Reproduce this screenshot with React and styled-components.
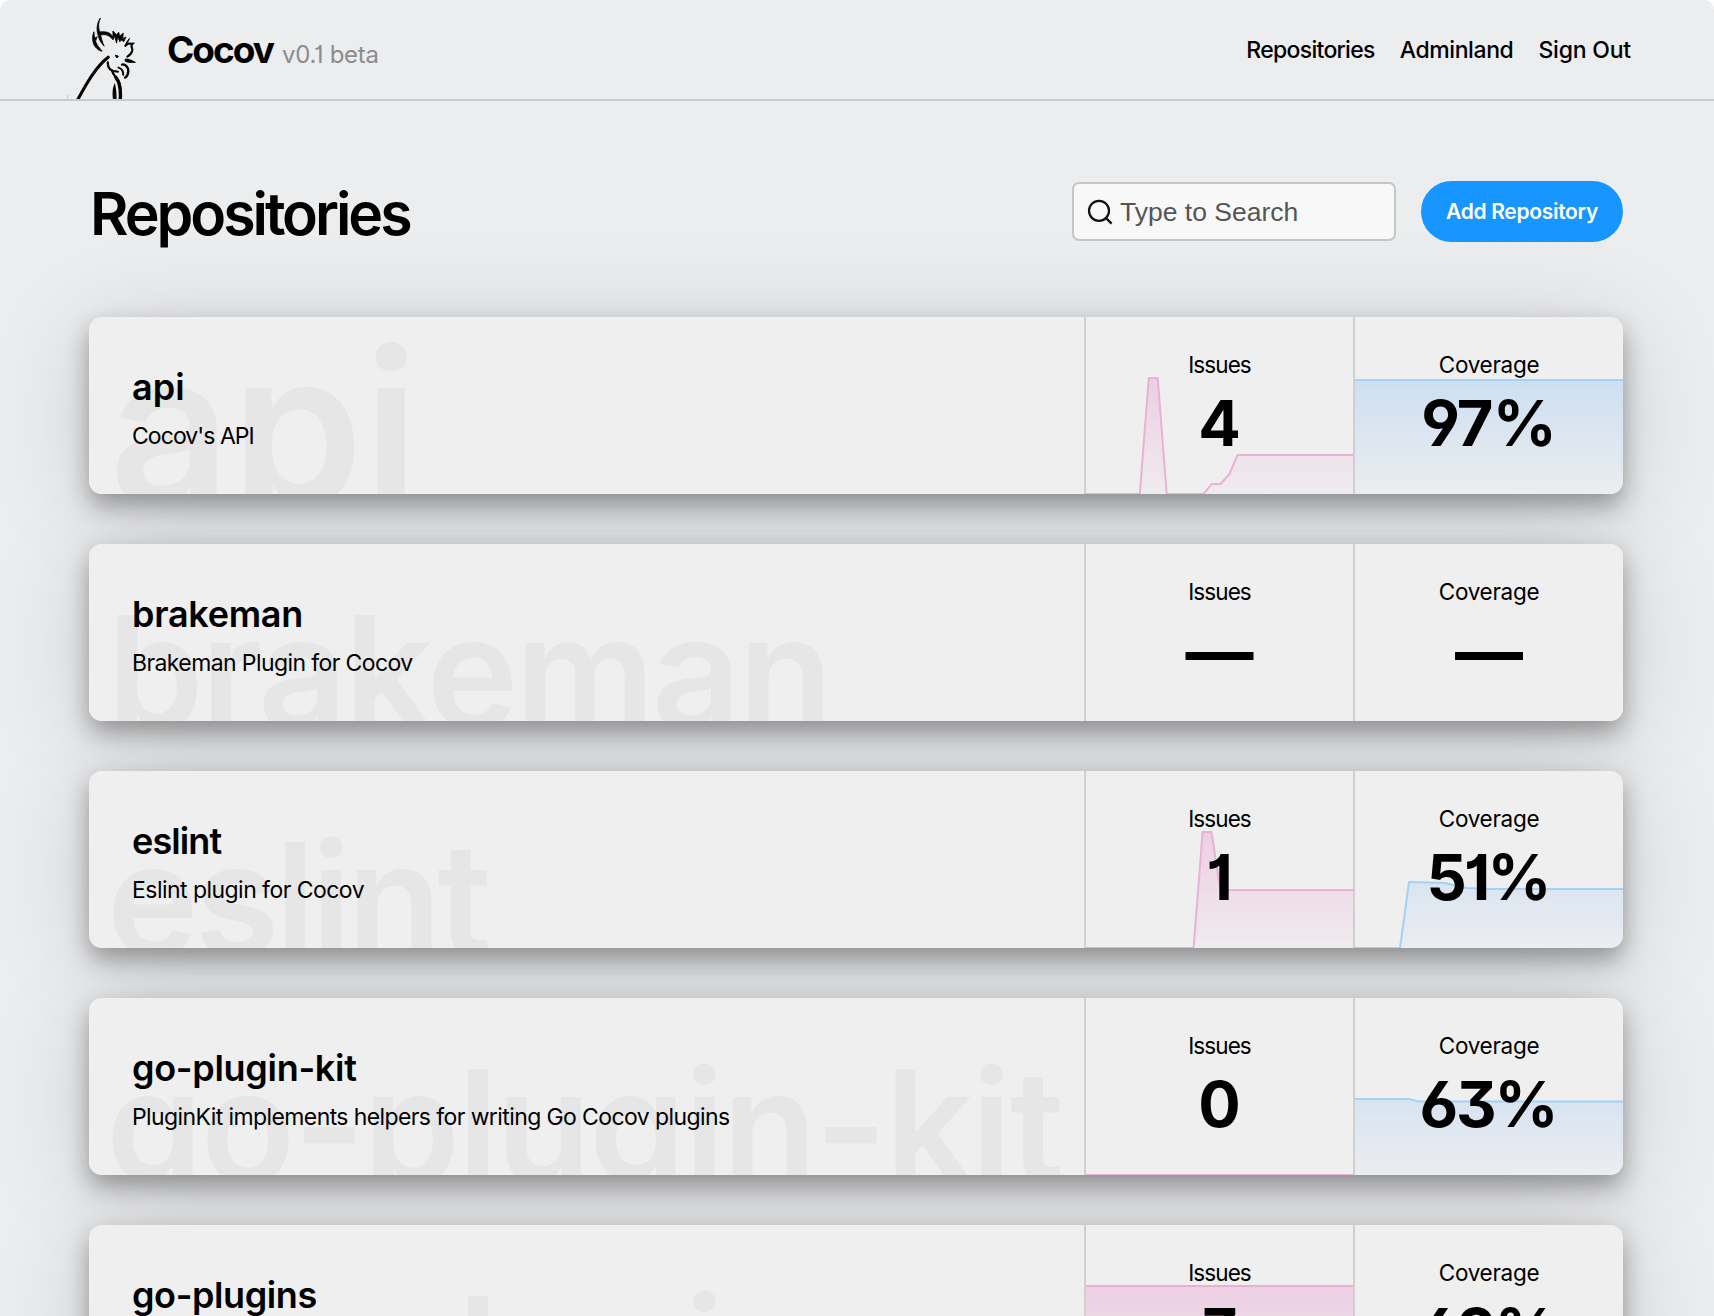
import React from "react";
import styled, { createGlobalStyle } from "styled-components";

const GlobalStyle = createGlobalStyle`
  *, *::before, *::after { box-sizing: border-box; }
  html { background: #fff; overflow: hidden; }
  body {
    margin: 0;
    color: #000;
    font-family: Inter, "Liberation Sans", sans-serif;
    font-feature-settings: "cv01", "cv03", "cv04", "cv09";
  }
`;

const Window = styled.div`
  height: 1316px;
  overflow: hidden;
  border-radius: 10px 10px 0 0;
  background: #ecedef;
  isolation: isolate;
`;

const Header = styled.header`
  display: flex;
  align-items: flex-start;
  height: 101px;
  padding: 0 83px 0 67px;
  border-bottom: 2px solid #c9cbcc;
`;

const Logo = styled.svg`
  flex: none;
  width: 76px;
  height: 87px;
  margin-top: 12px;
`;

const Brand = styled.div`
  display: flex;
  align-items: baseline;
  gap: 9px;
  margin: 28px 0 0 24px;
`;

const BrandName = styled.span`
  font-size: 37px;
  line-height: 44px;
  font-weight: 700;
  letter-spacing: -2px;
`;

const Version = styled.span`
  color: #8b8c8d;
  font-size: 24px;
  letter-spacing: -0.3px;
`;

const Nav = styled.nav`
  display: flex;
  gap: 25px;
  margin: 36px 0 0 auto;
`;

const NavLink = styled.a`
  font-size: 23px;
  line-height: 28px;
  font-weight: 500;
  letter-spacing: ${(p) => p.$track}px;
`;

const Main = styled.main`
  padding: 80px 91px 0 89px;
`;

const TitleBar = styled.div`
  display: flex;
  align-items: center;
  height: 61px;
  margin-bottom: 75px;
`;

const Title = styled.h1`
  margin: 5px auto 0 1px;
  font-size: 59px;
  line-height: 70px;
  font-weight: 600;
  letter-spacing: -3.05px;
`;

const SearchBox = styled.label`
  display: flex;
  align-items: center;
  gap: 7px;
  width: 324px;
  height: 59px;
  padding-left: 13px;
  border: 2px solid #c4c5c5;
  border-radius: 7px;
  background: #f8f8f8;
`;

const SearchIcon = styled.svg`
  flex: none;
  width: 26px;
  height: 26px;
`;

const SearchText = styled.span`
  color: #555;
  font-family: "Liberation Sans", Arial, sans-serif;
  font-size: 26.5px;
  line-height: 32px;
`;

const AddButton = styled.button`
  width: 202px;
  height: 61px;
  margin-left: 25px;
  padding: 0;
  border: 0;
  border-radius: 31px;
  background: #1896ff;
  color: #fff;
  font-family: inherit;
  font-size: 21px;
  font-weight: 600;
  letter-spacing: -0.3px;
`;

const CardList = styled.div`
  display: grid;
  gap: 50px;
`;

const Card = styled.article`
  position: relative;
  display: grid;
  grid-template-columns: 1fr 269px 270px;
  height: 177px;

  &::before {
    content: "";
    position: absolute;
    z-index: -1;
    inset: 0;
    border-radius: 13px;
    box-shadow: 0 14px 100px rgba(0, 0, 0, 0.15), 0 11px 24px rgba(0, 0, 0, 0.33);
  }
`;

const Info = styled.div`
  position: relative;
  display: flex;
  flex-direction: column;
  overflow: hidden;
  padding: 46px 0 0 43px;
  border-radius: 13px 0 0 13px;
  background: #efefef;
`;

const Watermark = styled.span`
  position: absolute;
  left: ${(p) => p.$left}px;
  top: ${(p) => p.$top}px;
  color: #e6e6e6;
  font-size: ${(p) => p.$size}px;
  line-height: 1;
  font-weight: 600;
  letter-spacing: ${(p) => p.$track}px;
  white-space: nowrap;
`;

const RepoName = styled.h2`
  position: relative;
  margin: 0;
  font-size: 36px;
  line-height: 48px;
  font-weight: 600;
  letter-spacing: ${(p) => p.$track}px;
`;

const Description = styled.p`
  position: relative;
  margin: 11px 0 0;
  font-size: 23px;
  line-height: 28px;
  letter-spacing: ${(p) => p.$track}px;
`;

const Metric = styled.div`
  position: relative;
  display: flex;
  flex-direction: column;
  align-items: center;
  overflow: hidden;
  padding-top: 34px;
  border-left: 2px solid #d0d0d1;
  background: #efefef;

  &:last-child {
    border-radius: 0 13px 13px 0;
  }
`;

const Chart = styled.svg`
  position: absolute;
  inset: 0;
  width: 100%;
  height: 100%;
`;

const MetricLabel = styled.span`
  position: relative;
  font-size: 22.5px;
  line-height: 28px;
  letter-spacing: ${(p) => p.$track}px;
`;

const MetricValue = styled.span`
  position: relative;
  font-size: 63px;
  line-height: 76px;
  margin-top: 6px;
  font-weight: 700;
  letter-spacing: ${(p) => p.$track}px;
  margin-right: ${(p) => -p.$track}px;
`;

const EmptyValue = styled(MetricValue)`
  font-size: 68px;
  margin-top: 7px;
`;

const tones = {
  pink: { line: "#e9b2d5", fill: "#eccbe2" },
  blue: { line: "#a3d2f7", fill: "#c9dcf3" },
};

function AreaChart({ tone, points, id }) {
  const { line, fill } = tones[tone];
  const d = points.map(([x, y], i) => `${i ? "L" : "M"}${x} ${y}`).join("");
  return (
    <Chart viewBox="0 0 268 177" preserveAspectRatio="none">
      <defs>
        <linearGradient id={id} gradientUnits="userSpaceOnUse" x1="0" y1="60" x2="0" y2="177">
          <stop offset="0" stopColor={fill} stopOpacity="0.9" />
          <stop offset="1" stopColor={fill} stopOpacity="0.1" />
        </linearGradient>
      </defs>
      <path d={`${d}L268 177L0 177Z`} fill={`url(#${id})`} />
      <path d={d} fill="none" stroke={line} strokeWidth="2" strokeLinejoin="round" />
    </Chart>
  );
}

const repos = [
  {
    name: "api", track: 0, text: "Cocov's API", textTrack: -0.95,
    mark: { $left: 20, $top: 4, $size: 212, $track: 0.2 },
    issues: { value: "4", points: [[0, 177], [54, 177], [63, 61], [72, 61], [81, 177], [118, 177], [126, 167], [135, 167], [144, 157], [152, 138], [268, 138]] },
    coverage: { value: "97%", track: -0.6, points: [[0, 63], [268, 63]] },
  },
  {
    name: "brakeman", track: -0.27, text: "Brakeman Plugin for Cocov", textTrack: -0.6,
    mark: { $left: 18, $top: 50, $size: 155, $track: -2.8 },
  },
  {
    name: "eslint", track: -0.9, text: "Eslint plugin for Cocov", textTrack: -0.54,
    mark: { $left: 18, $top: 50, $size: 155, $track: -4.5 },
    issues: { value: "1", points: [[0, 177], [108, 177], [117, 61], [126, 61], [135, 119], [268, 119]] },
    coverage: { value: "51%", track: -2.8, points: [[0, 177], [45, 177], [54, 111], [90, 112], [112, 117], [135, 118], [268, 118]] },
  },
  {
    name: "go-plugin-kit", track: -0.3, text: "PluginKit implements helpers for writing Go Cocov plugins", textTrack: -0.6,
    mark: { $left: 17, $top: 50, $size: 155, $track: -2.1 },
    issues: { value: "0", points: [[0, 177], [268, 177]] },
    coverage: { value: "63%", track: -2.2, points: [[0, 101], [54, 101], [63, 103.5], [268, 103.5]] },
  },
  {
    name: "go-plugins", track: -0.4, text: "", textTrack: 0,
    mark: { $left: 17, $top: 50, $size: 155, $track: -2.1 },
    issues: { value: "3", points: [[0, 61], [268, 61]] },
    coverage: { value: "60%", track: -2.8 },
  },
];

function MetricCell({ label, labelTrack, tone, data, id }) {
  return (
    <Metric>
      {data?.points && <AreaChart tone={tone} points={data.points} id={id} />}
      <MetricLabel $track={labelTrack}>{label}</MetricLabel>
      {data ? (
        <MetricValue $track={data.track ?? 0}>{data.value}</MetricValue>
      ) : (
        <EmptyValue $track={0}>—</EmptyValue>
      )}
    </Metric>
  );
}

function Rooster() {
  return (
    <Logo viewBox="67 12 76 87" fill="#050505" aria-label="Cocov">
      <g stroke="#050505" strokeWidth="0.8" strokeLinejoin="round">
        <path d="M100.4 18C98.2 22.4 98.2 27.5 99.6 31.8L104.5 31.8C108 32 110.7 33.4 112.3 36L112.8 39.6C110.4 36.6 107.8 34.6 103.6 34.6L100.6 35C101.6 39.5 102.6 42.6 104.2 46.2C100.6 42.6 99 39.4 98.3 35.6C96.1 29.6 96.8 23 100.4 18Z" />
        <path d="M94 31.8C91.8 36 92.1 43.1 95.4 47.1C97.4 49.4 99.5 51 102.2 51.2L100 48.6C97.8 45.6 96.2 43.6 95.6 41L97.2 36.6C94.6 39.6 94.1 36.5 94 31.8Z" />
        <path d="M112.9 31L116.6 34.8L118.7 32.2L119.6 36L123.4 33.2L122.6 38.4L126 37L123.9 41.6L121 39.9L119.8 41.9L117.7 36.8L116.6 43.2L114.3 35.8L113 39.6Z" />
        <path d="M129.6 38.2C128.6 41 127 44 124.8 46.2C125.6 43.4 127.5 40.6 129.6 38.2Z" />
      </g>
      <g fill="none" stroke="#050505" strokeLinecap="round">
        <path d="M125.6 45.8L128 43.6L132.6 43.8C129.8 46.3 132.8 47.3 132.3 50.5C131.8 53 130.2 55 127.3 56.6" strokeWidth="2.1" />
        <path d="M77.8 99.5C86.5 83.5 96 66.5 108.2 57.2" strokeWidth="3.1" />
        <path d="M107.8 62.4C107.8 66.2 108.6 69 112 70.4C113 75 116.4 77.5 118.7 81.5C121 86 120.8 92 120.2 99.5" strokeWidth="2.3" />
        <path d="M116 77.6C119.6 82 121 88 120.3 99.5" strokeWidth="3.4" />
        <path d="M112 70.8L118 71.7" strokeWidth="2" />
        <path d="M118.5 67.6C121.3 68.4 123.4 71.2 123.2 74.8" strokeWidth="2" />
        <path d="M122 64.6C125.8 64.2 128.5 67.4 128.3 71.2C128.1 74.2 127 76.4 125.2 77.6" strokeWidth="2.4" />
      </g>
      <path d="M113.8 99.5C113 94 113.4 88.6 114.6 85.6C115.4 89 115.8 94 115.8 99.5Z" stroke="#050505" strokeWidth="1.6" />
      <path d="M115.3 55.2L118.4 56.2L116.8 58Z" stroke="#050505" />
      <path d="M125.2 59C129.2 58.8 132.5 60.8 135.4 62.4C131.2 62.5 127.7 62.6 125.2 61.2Z" stroke="#050505" strokeWidth="0.9" />
      <path d="M67.6 95V99" stroke="#c6c7c8" />
    </Logo>
  );
}

export default function App() {
  return (
    <Window>
      <GlobalStyle />
      <Header>
        <Rooster />
        <Brand>
          <BrandName>Cocov</BrandName>
          <Version>v0.1 beta</Version>
        </Brand>
        <Nav>
          <NavLink $track={-0.7}>Repositories</NavLink>
          <NavLink $track={-0.4}>Adminland</NavLink>
          <NavLink $track={-0.2}>Sign Out</NavLink>
        </Nav>
      </Header>
      <Main>
        <TitleBar>
          <Title>Repositories</Title>
          <SearchBox>
            <SearchIcon viewBox="0 0 26 26" fill="none" stroke="#111" strokeWidth="2.2">
              <circle cx="12" cy="11.8" r="10" />
              <path d="M18.6 18.6L24.6 24.6" />
            </SearchIcon>
            <SearchText>Type to Search</SearchText>
          </SearchBox>
          <AddButton>Add Repository</AddButton>
        </TitleBar>
        <CardList>
          {repos.map((repo) => (
            <Card key={repo.name}>
              <Info>
                <Watermark aria-hidden="true" {...repo.mark}>{repo.name}</Watermark>
                <RepoName $track={repo.track}>{repo.name}</RepoName>
                <Description $track={repo.textTrack}>{repo.text}</Description>
              </Info>
              <MetricCell label="Issues" labelTrack={-0.9} tone="pink" data={repo.issues} id={`issues-${repo.name}`} />
              <MetricCell label="Coverage" labelTrack={-0.3} tone="blue" data={repo.coverage} id={`coverage-${repo.name}`} />
            </Card>
          ))}
        </CardList>
      </Main>
    </Window>
  );
}
